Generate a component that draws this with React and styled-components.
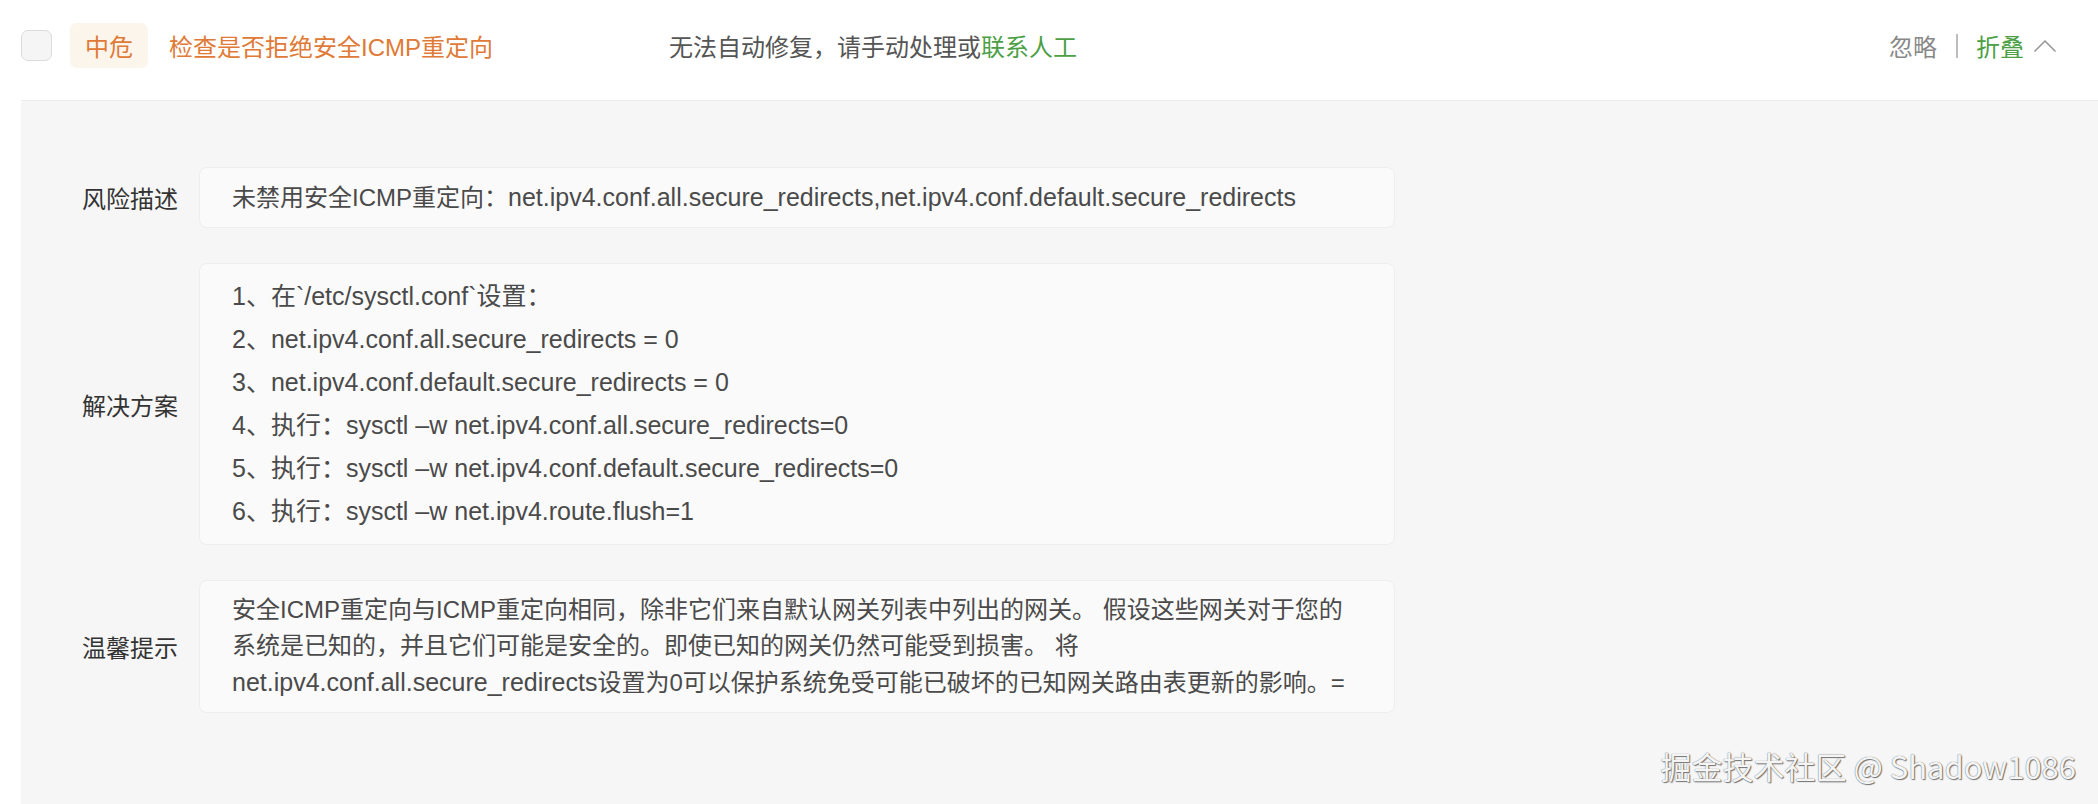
import React from 'react';
import styled, { createGlobalStyle } from 'styled-components';
import { ChevronUp } from 'lucide-react';

const GlobalStyle = createGlobalStyle`
  body {
    margin: 0;
    background: #fff;
    font-family: "Liberation Sans", "Noto Sans CJK SC", sans-serif;
  }
`;

const Page = styled.div`
  position: relative;
  width: 2098px;
  height: 804px;
  overflow: hidden;
`;

const Header = styled.div`
  height: 100px;
  display: flex;
  align-items: center;
  padding: 0 33px 9px 21px;
  box-sizing: border-box;
  font-size: 24px;
`;

const Checkbox = styled.span`
  width: 29px;
  height: 29px;
  border: 1px solid #dcdcdc;
  background: #f5f5f5;
  border-radius: 7px;
  margin-right: 18px;
`;

const Tag = styled.span`
  width: 78px;
  height: 45px;
  display: flex;
  align-items: center;
  justify-content: center;
  background: #fcf5ec;
  color: #e07a36;
  border-radius: 7px;
  margin-right: 21px;
`;

const Title = styled.span`
  width: 500px;
  color: #e07a36;
`;

const Status = styled.span`
  color: #555;
`;

const Green = styled.span`
  color: #4c9f45;
`;

const Actions = styled.div`
  margin-left: auto;
  display: flex;
  align-items: center;
  color: #888;
`;

const Sep = styled.span`
  width: 2px;
  height: 24px;
  background: #bdbdbd;
  margin: 0 18px 0 19px;
`;

const Panel = styled.div`
  margin-left: 21px;
  height: 704px;
  background: #f6f6f6;
  border-top: 1px solid #ececec;
  box-sizing: border-box;
  padding: 66px 0 0 61px;
`;

const Grid = styled.div`
  display: grid;
  grid-template-columns: 96px 1196px;
  column-gap: 21px;
  row-gap: 35px;
  align-items: center;
`;

const Label = styled.div`
  font-size: 24px;
  color: #333;
`;

const Box = styled.div`
  background: #fafafa;
  border: 1px solid #eeeeee;
  border-radius: 8px;
  padding: 11px 32px;
  font-size: ${p => p.$fs || 24}px;
  line-height: ${p => p.$lh || 36}px;
  color: #4a4a4a;
`;

const Line = styled.div``;

const Lat = styled.span`
  font-size: 25px;
`;

const Watermark = styled.div`
  position: absolute;
  right: 22px;
  bottom: 16px;
  font-family: "Noto Sans CJK SC", sans-serif;
  font-size: 31px;
  color: #f4f4f4;
  text-shadow: 0 0 1px #555, 1px 1px 1px #777;
`;

const steps = [
  '1、在`/etc/sysctl.conf`设置：',
  '2、net.ipv4.conf.all.secure_redirects = 0',
  '3、net.ipv4.conf.default.secure_redirects = 0',
  '4、执行：sysctl –w net.ipv4.conf.all.secure_redirects=0',
  '5、执行：sysctl –w net.ipv4.conf.default.secure_redirects=0',
  '6、执行：sysctl –w net.ipv4.route.flush=1',
];

export default function App() {
  return (
    <Page>
      <GlobalStyle />
      <Header>
        <Checkbox />
        <Tag>中危</Tag>
        <Title>检查是否拒绝安全ICMP重定向</Title>
        <Status>
          无法自动修复，请手动处理或<Green>联系人工</Green>
        </Status>
        <Actions>
          忽略
          <Sep />
          <Green>折叠</Green>
          <ChevronUp size={40} strokeWidth={1} color="#999" style={{ marginLeft: 1 }} />
        </Actions>
      </Header>
      <Panel>
        <Grid>
          <Label>风险描述</Label>
          <Box>
            未禁用安全ICMP重定向：<Lat>net.ipv4.conf.all.secure_redirects,net.ipv4.conf.default.secure_redirects</Lat>
          </Box>
          <Label>解决方案</Label>
          <Box $lh={43} $fs={25}>
            {steps.map(s => <Line key={s}>{s}</Line>)}
          </Box>
          <Label>温馨提示</Label>
          <Box>
            <Line>安全ICMP重定向与ICMP重定向相同，除非它们来自默认网关列表中列出的网关。 假设这些网关对于您的</Line>
            <Line>系统是已知的，并且它们可能是安全的。即使已知的网关仍然可能受到损害。 将</Line>
            <Line><Lat>net.ipv4.conf.all.secure_redirects</Lat>设置为0可以保护系统免受可能已破坏的已知网关路由表更新的影响。=</Line>
          </Box>
        </Grid>
      </Panel>
      <Watermark>掘金技术社区 @ Shadow1086</Watermark>
    </Page>
  );
}
